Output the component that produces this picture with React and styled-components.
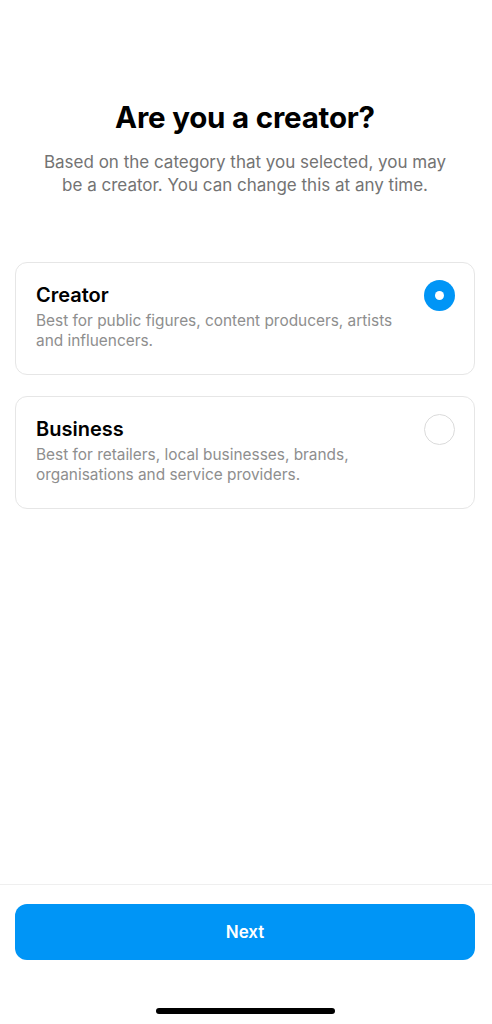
import React, { useState } from "react";
import styled, { createGlobalStyle } from "styled-components";

const GlobalStyle = createGlobalStyle`
  html, body { margin: 0; padding: 0; background: #ffffff; }
  body { font-family: Inter, "Noto Sans", "Liberation Sans", sans-serif; -webkit-font-smoothing: antialiased; }
  * { box-sizing: border-box; }
`;

const Page = styled.div`
  width: 492px;
  height: 1024px;
  display: flex;
  flex-direction: column;
  background: #ffffff;
`;

const Content = styled.main`
  flex: 1;
  padding: 99px 17px 0 15px;
  display: flex;
  flex-direction: column;
`;

const Title = styled.h1`
  margin: 0;
  text-align: center;
  font-size: 29.5px;
  line-height: 36px;
  font-weight: 700;
  color: #000;
  letter-spacing: -0.2px;
`;

const Subtitle = styled.p`
  margin: 16px 0 0;
  text-align: center;
  font-size: 17px;
  line-height: 23px;
  color: #737373;
  padding: 0 20px;
`;

const Options = styled.div`
  margin-top: 65px;
  display: flex;
  flex-direction: column;
  gap: 21px;
`;

const Card = styled.button`
  display: flex;
  align-items: flex-start;
  gap: 20px;
  width: 100%;
  min-height: 113px;
  padding: 19px 19px 23px 20px;
  border: 1px solid #e6e6e6;
  border-radius: 12px;
  background: #fff;
  text-align: left;
  font: inherit;
  cursor: pointer;
`;

const CardText = styled.div`
  flex: 1;
  display: flex;
  flex-direction: column;
  gap: 3px;
`;

const CardTitle = styled.span`
  font-size: 20px;
  line-height: 26px;
  font-weight: 600;
  color: #000;
`;

const CardDesc = styled.span`
  font-size: 15.4px;
  line-height: 20px;
  color: #8e8e8e;
`;

const Radio = styled.span`
  flex: none;
  width: 31px;
  height: 31px;
  margin-top: -2px;
  border-radius: 50%;
  display: flex;
  align-items: center;
  justify-content: center;
  background: ${(p) => (p.$checked ? "#0095f6" : "#fff")};
  border: ${(p) => (p.$checked ? "none" : "1.5px solid #dbdbdb")};
  &::after {
    content: "";
    display: ${(p) => (p.$checked ? "block" : "none")};
    width: 9px;
    height: 9px;
    border-radius: 50%;
    background: #fff;
  }
`;

const Footer = styled.footer`
  height: 140px;
  border-top: 1px solid #efefef;
  padding: 19px 17px 0 15px;
  display: flex;
  flex-direction: column;
  align-items: center;
`;

const NextButton = styled.button`
  width: 100%;
  height: 56px;
  border: none;
  border-radius: 12px;
  background: #0095f6;
  color: #fff;
  font: inherit;
  font-size: 17px;
  font-weight: 600;
  padding-top: 1px;
  cursor: pointer;
`;

const HomeIndicator = styled.div`
  width: 179px;
  height: 6px;
  border-radius: 3px;
  background: #000;
  margin-top: 48px;
`;

const options = [
  {
    id: "creator",
    title: "Creator",
    desc: "Best for public figures, content producers, artists and influencers.",
  },
  {
    id: "business",
    title: "Business",
    desc: "Best for retailers, local businesses, brands, organisations and service providers.",
  },
];

export default function App() {
  const [selected, setSelected] = useState("creator");
  return (
    <>
      <GlobalStyle />
      <Page>
        <Content>
          <Title>Are you a creator?</Title>
          <Subtitle>
            Based on the category that you selected, you may be a creator. You can change this at any time.
          </Subtitle>
          <Options>
            {options.map((o) => (
              <Card key={o.id} onClick={() => setSelected(o.id)}>
                <CardText>
                  <CardTitle>{o.title}</CardTitle>
                  <CardDesc>{o.desc}</CardDesc>
                </CardText>
                <Radio $checked={selected === o.id} />
              </Card>
            ))}
          </Options>
        </Content>
        <Footer>
          <NextButton>Next</NextButton>
          <HomeIndicator />
        </Footer>
      </Page>
    </>
  );
}
